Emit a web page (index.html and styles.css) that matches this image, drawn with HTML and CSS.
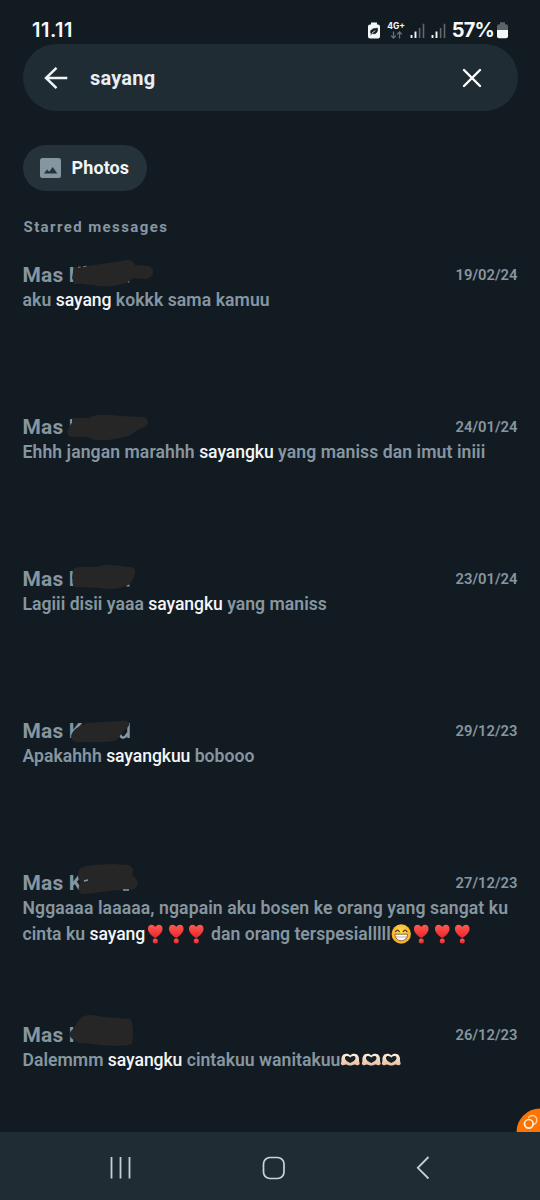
FILE: index.html
```html
<!DOCTYPE html>
<html lang="id">
<head>
<meta charset="utf-8">
<title>Search</title>
<link rel="stylesheet" href="styles.css">
</head>
<body>
<svg width="0" height="0" class="defs" aria-hidden="true">
  <defs>
    <linearGradient id="red" x1="0" y1="0" x2="0" y2="1"><stop offset="0" stop-color="#ff5a50"/><stop offset="1" stop-color="#e9252c"/></linearGradient>
    <linearGradient id="skin" x1="0" y1="0" x2="0" y2="1"><stop offset="0" stop-color="#fff0de"/><stop offset="1" stop-color="#e9bda2"/></linearGradient>
    <radialGradient id="yellow" cx=".5" cy=".4" r=".6"><stop offset="0" stop-color="#ffe04a"/><stop offset="1" stop-color="#f9a825"/></radialGradient>
    <symbol id="heart" viewBox="0 0 20 20">
      <path d="M10 14C6.500 11.800 2.700 8.500 2.700 4.700C2.700 2.200 4.300 .7 6.300 .7C8 .7 9.400 1.600 10 3.100C10.600 1.600 12 .7 13.700 .7C15.700 .7 17.300 2.200 17.300 4.700C17.300 8.500 13.500 11.800 10 14Z" fill="url(#red)"/>
      <circle cx="10" cy="16.900" r="2.500" fill="url(#red)"/>
    </symbol>
    <symbol id="grin" viewBox="0 0 20 20">
      <circle cx="10" cy="10" r="9.700" fill="url(#yellow)"/>
      <path d="M4.300 7.600Q6.200 4.800 8 7.600M12 7.600Q13.800 4.800 15.700 7.600" fill="none" stroke="#5c3b1e" stroke-width="1.300" stroke-linecap="round"/>
      <path d="M3.700 10.200H16.300C16.300 14.200 13.500 16.700 10 16.700S3.700 14.200 3.700 10.200Z" fill="#fff" stroke="#6b4a2c" stroke-width=".8"/>
      <path d="M4 13H16" stroke="#8a7a6a" stroke-width=".6"/>
    </symbol>
    <symbol id="hands" viewBox="0 0 20 20">
      <path d="M.6 14C.6 12.500 1.200 12 1.200 10.500C.9 6.500 2.600 3.700 6 3.700C7.700 3.700 9.200 4.300 10 5.400C10.800 4.300 12.300 3.700 14 3.700C17.400 3.700 19.100 6.500 18.800 10.500C18.800 12 19.400 12.500 19.400 14C18.400 15.700 16 15.500 14.800 14.500C13.500 14 12.400 15.500 10 15.500S6.500 14 5.200 14.500C4 15.500 1.600 15.700 .6 14Z" fill="url(#skin)"/>
      <path d="M10 13C7.500 12 4.700 10.200 4.700 8C4.700 6.500 5.600 5.900 6.800 5.900C8.200 5.900 9.500 6.600 10 7.700C10.500 6.600 11.800 5.900 13.200 5.900C14.400 5.900 15.300 6.500 15.300 8C15.300 10.200 12.500 12 10 13Z" fill="#172027"/>
    </symbol>
    <symbol id="signal" viewBox="0 0 15 16">
      <path d="M1.500 12V15M5.500 8.500V15" stroke="#f2f5f6" stroke-width="1.900"/>
      <path d="M9.600 5V15M13.500 .8V15" stroke="#5f696f" stroke-width="1.600"/>
    </symbol>
  </defs>
</svg>

<header class="status">
  <span class="clock">11.11</span>
  <div class="indicators">
    <svg class="saver" width="12" height="17" viewBox="0 0 12 17"><path d="M3 .5H9V2.500H10A2 2 0 0 1 12 4.500V14.500A2 2 0 0 1 10 16.500H2A2 2 0 0 1 0 14.500V4.500A2 2 0 0 1 2 2.500H3Z" fill="#f4f7f8"/><path d="M3 11.500C1.500 8.500 4 6.500 9.500 6.300C9.800 10.500 7.500 12.800 4.500 11.200M2.500 13L7 8.900" fill="#172027" stroke="#172027" stroke-width=".8"/><path d="M4 11L7.300 8.700" stroke="#f4f7f8" stroke-width=".8"/></svg>
    <div class="network"><span>4G+</span>
      <svg width="13" height="8" viewBox="0 0 13 8"><path d="M3.500 .5V7M1 4.600L3.500 7L6 4.600M9.500 7.500V1M7 3.400L9.500 1L12 3.400" fill="none" stroke="#657078" stroke-width="1.300"/></svg>
    </div>
    <svg class="bars" width="15" height="16"><use href="#signal"/></svg>
    <svg class="bars" width="15" height="16"><use href="#signal"/></svg>
    <span class="percent">57%</span>
    <svg class="battery" width="11" height="17" viewBox="0 0 11 17"><path d="M3 .3H8V2.300H9Q11 2.300 11 4.300V8H0V4.300Q0 2.300 2 2.300H3Z" fill="#5c646a"/><path d="M0 8H11V14.300Q11 16.300 9 16.300H2Q0 16.300 0 14.300Z" fill="#f4f7f8"/></svg>
  </div>
</header>

<div class="search">
  <svg width="24" height="24" viewBox="0 0 24 24"><path d="M23.300 12H2M12.500 1.800L2 12L12.500 22.200" fill="none" stroke="#eef3f6" stroke-width="2.500"/></svg>
  <span class="query">sayang</span>
  <svg class="clear" width="20" height="20" viewBox="0 0 20 20"><path d="M2 2L18 18M18 2L2 18" stroke="#fff" stroke-width="2.400" stroke-linecap="round"/></svg>
</div>

<div class="chip">
  <svg width="21" height="20" viewBox="0 0 21 20"><rect width="21" height="20" rx="2.500" fill="#8696a0"/><path d="M4 15.500L7 11.500L9.300 13.700L12.700 9L17.300 15.500Z" fill="#25323a"/></svg>
  <span>Photos</span>
</div>

<h2 class="heading">Starred messages</h2>

<main class="list">
  <article class="row">
    <div class="top"><span class="name">Mas K</span><time>19/02/24</time>
      <svg class="mask" width="100" height="38" viewBox="60 256 100 38"><path d="M74 267H84V284H74Z"/><path d="M78 267.500H81M83 267L87 266.500M128.500 281V282.500" stroke="#8696a0" stroke-width="1.500"/><path d="M73 272C73 267 79 268 88 266L122 261C129 258 133 261 135 265L148 266C156 268 154 277 147 279L133 278C127 285 112 287 98 286C84 284 73 284 72 278Z"/></svg></div>
    <p>aku <b>sayang</b> kokkk sama kamuu</p>
  </article>
  <article class="row">
    <div class="top"><span class="name">Mas K</span><time>24/01/24</time>
      <svg class="mask" width="100" height="38" viewBox="60 408 100 38"><path d="M72 418H88V437H72Z"/><path d="M71 424C75 418 84 418 88 419C94 413 110 415 120 416L143 417C150 418 149 427 142 428C137 430 134 432 131 435C120 438 110 441 98 440C91 440 89 437 85 436L71 437C66 435 67 430 69 427Z"/></svg></div>
    <p>Ehhh jangan marahhh <b>sayangku</b> yang maniss dan imut iniii</p>
  </article>
  <article class="row">
    <div class="top"><span class="name">Mas K</span><time>23/01/24</time>
      <svg class="mask" width="100" height="38" viewBox="60 560 100 38"><path d="M126.500 584.500H129.500V586.500H126.500Z" class="trace"/><path d="M73 569C78 566 89 567 96 567C107 563 119 566 130 567C138 567 135 577 132 581C127 589 112 590 99 588L75 587C71 584 73 580 72 578Z"/></svg></div>
    <p class="snug">Lagiii disii yaaa <b>sayangku</b> yang maniss</p>
  </article>
  <article class="row">
    <div class="top"><span class="name">Mas K</span><time>29/12/23</time>
      <svg class="mask" width="100" height="38" viewBox="60 712 100 38"><path d="M128.500 723V738M120 734Q121 739 125 737L128 733" fill="none" stroke="#8696a0" stroke-width="2.500"/><path d="M71 736C73 729 80 725 88 723L121 721C130 719 131 725 127 728C123 731 120 736 117 740C108 743 94 742 81 742C75 742 71 741 71 736Z"/></svg></div>
    <p class="snug">Apakahhh <b>sayangkuu</b> bobooo</p>
  </article>
  <article class="row">
    <div class="top"><span class="name">Mas K</span><time>27/12/23</time>
      <svg class="mask" width="100" height="38" viewBox="60 864 100 38"><path d="M79 870C82 864 98 865 112 864L128 865C134 867 134 872 132 876C141 879 138 888 132 890C113 889 96 894 83 894C77 893 78 887 81 883C78 879 77 875 79 870Z"/><path d="M84 881L88 880M123 890H129" stroke="#8696a0" stroke-width="1.300"/></svg></div>
    <p class="snug"><span class="wide">Nggaaaa laaaaa, ngapain aku bosen ke orang yang sangat ku</span><br>cinta ku <b>sayang</b><svg class="emoji"><use href="#heart"/></svg><svg class="emoji"><use href="#heart"/></svg><svg class="emoji"><use href="#heart"/></svg> dan orang terspesialllll<svg class="emoji"><use href="#grin"/></svg><svg class="emoji"><use href="#heart"/></svg><svg class="emoji"><use href="#heart"/></svg><svg class="emoji"><use href="#heart"/></svg></p>
  </article>
  <article class="row">
    <div class="top"><span class="name">Mas K</span><time>26/12/23</time>
      <svg class="mask" width="100" height="38" viewBox="60 1012 100 38"><path d="M82 1017C89 1013 97 1016 105 1017L130 1019C134 1022 133 1039 132 1044C125 1047 105 1046 93 1044C85 1043 77 1044 74 1040C68 1037 69 1032 73 1029C76 1025 78 1020 82 1017Z"/></svg></div>
    <p class="snug">Dalemmm <b>sayangku</b> cintakuu wanitakuu<svg class="emoji"><use href="#hands"/></svg><svg class="emoji"><use href="#hands"/></svg><svg class="emoji"><use href="#hands"/></svg></p>
  </article>
</main>

<svg class="bubble" width="24" height="24" viewBox="0 0 24 24"><circle cx="24" cy="24" r="23.500" fill="#ff7300"/><g fill="none" stroke="#ffd5ae" stroke-width="1.400"><path d="M12.200 10A4.600 4.600 0 1 1 17.500 16.500"/><circle cx="12.800" cy="15.800" r="4.300" stroke="#fff2e5" stroke-width="1.700"/></g></svg>

<nav class="nav">
  <svg width="22" height="24" viewBox="0 0 22 24"><path d="M1.500 1V22.500M10.500 1V22.500M19.500 1V22.500" stroke="#c6ced3" stroke-width="1.800"/></svg>
  <svg width="24" height="24" viewBox="0 0 24 24"><rect x="1.500" y="1.500" width="20.500" height="21" rx="6.500" fill="none" stroke="#cbd3d8" stroke-width="1.700"/></svg>
  <svg width="14" height="24" viewBox="0 0 14 24"><path d="M12.500 1L1.800 11.800L12.500 22.500" fill="none" stroke="#c6ced3" stroke-width="1.800"/></svg>
</nav>
</body>
</html>
```
FILE: styles.css
```css
* { box-sizing: border-box; }
body {
  margin: 0;
  width: 540px;
  height: 1200px;
  overflow: hidden;
  position: relative;
  display: flex;
  flex-direction: column;
  background: #121b22;
  color: #8696a0;
  font-family: Roboto, "Liberation Sans", sans-serif;
}
svg { display: block; flex: none; }
.defs { position: absolute; }
.status {
  height: 44px;
  padding: 17px 32px 0 32px;
  display: flex;
  justify-content: space-between;
  color: #f6f8fa;
  font-family: Inter, Roboto, sans-serif;
}
.clock { font-size: 20px; font-weight: 600; line-height: 27px; letter-spacing: .5px; }
.indicators { display: flex; height: 27px; align-items: center; }
.network { display: flex; flex-direction: column; align-items: center; width: 17px; margin-left: 8px; }
.network span { font-size: 8.500px; line-height: 9px; font-weight: 700; }
.bars { margin-left: 5.500px; }
.percent { margin-left: 6px; font-size: 20px; line-height: 27px; font-weight: 700; letter-spacing: -.8px; }
.battery { margin-left: 3px; }
.search {
  height: 67px;
  margin: 0 22.5px;
  padding: 0 36px 0 21px;
  border-radius: 34px;
  background: #202c33;
  display: flex;
  align-items: center;
}
.query { margin-left: 22.500px; color: #e9eef2; font-size: 20px; font-weight: 700; line-height: 24px; letter-spacing: .2px; }
.clear { margin-left: auto; }
.chip {
  width: 124px;
  height: 46px;
  margin: 34px 0 0 23px;
  padding-left: 17px;
  border-radius: 23px;
  background: #25323a;
  display: flex;
  align-items: center;
  gap: 10.500px;
  color: #f1f5f7;
  font-size: 18px;
  line-height: 22px;
  font-weight: 700;
  letter-spacing: .1px;
}
.chip span { padding-bottom: 1px; }
.heading { margin: 26px 0 0 23.500px; font-size: 15px; line-height: 20px; font-weight: 700; letter-spacing: 1.400px; }
.list { margin: 27px 22.5px 0; }
.row { height: 152px; }
.top { position: relative; height: 22px; display: flex; justify-content: space-between; align-items: center; }
.name { font-size: 21px; line-height: 22px; font-weight: 700; letter-spacing: .15px; }
time { font-size: 14.800px; line-height: 22px; font-weight: 600; letter-spacing: 0; }
.mask { position: absolute; left: 37.5px; top: -8px; fill: #262626; }
.row:last-child .mask { top: -12px; }
.trace { fill: #8696a0; }
p { margin: 1px 0 0; font-size: 17.600px; line-height: 26px; font-weight: 600; letter-spacing: .07px; white-space: nowrap; }
.snug { letter-spacing: .02px; }
.wide { letter-spacing: .1px; }
b { color: #f3f6f8; font-weight: 500; letter-spacing: -.08px; }
.emoji { display: inline-block; width: 20.5px; height: 20px; vertical-align: -4px; }
.bubble { position: absolute; right: 0; bottom: 68px; }
.nav {
  position: absolute;
  inset: auto 0 0;
  height: 68px;
  padding: 3px 110px 0;
  background: #202c33;
  display: flex;
  justify-content: space-between;
  align-items: center;
}
```
